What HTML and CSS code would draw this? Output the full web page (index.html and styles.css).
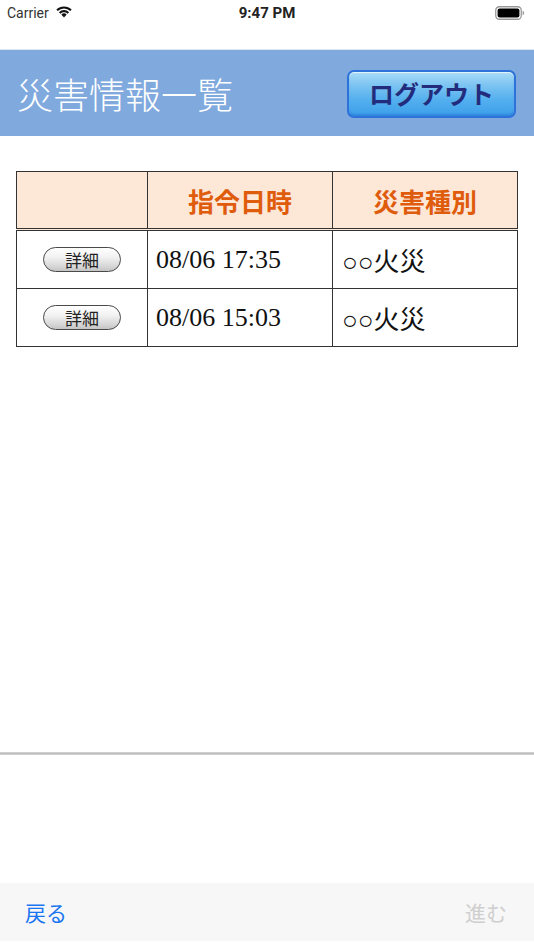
FILE: index.html
```html
<!DOCTYPE html>
<html lang="ja">
<head>
<meta charset="utf-8">
<title>災害情報一覧</title>
<link rel="stylesheet" href="styles.css">
</head>
<body>
<div class="screen">
  <div class="statusbar">
    <div class="sb-left">
      <span class="carrier">Carrier</span>
      <svg class="wifi" width="18" height="13" viewBox="0 0 18 13">
        <path d="M9 12.5 L6.3 9.6 A3.9 3.9 0 0 1 11.7 9.6 Z" fill="#111"/>
        <path d="M3.9 7.2 A7.3 7.3 0 0 1 14.1 7.2 L12.6 8.7 A5.2 5.2 0 0 0 5.4 8.7 Z" fill="#111"/>
        <path d="M1.3 4.6 A11 11 0 0 1 16.7 4.6 L15.2 6.1 A8.9 8.9 0 0 0 2.8 6.1 Z" fill="#111"/>
      </svg>
    </div>
    <div class="sb-time">9:47 PM</div>
    <div class="sb-right">
      <svg class="battery" width="30" height="14" viewBox="0 0 30 14">
        <rect x="0.75" y="0.75" width="25.5" height="12.5" rx="3.5" fill="none" stroke="#999" stroke-width="1.3"/>
        <rect x="2.6" y="2.6" width="21.8" height="8.8" rx="2" fill="#000"/>
        <path d="M27.6 4.8 Q29.2 5.2 29.2 7 Q29.2 8.8 27.6 9.2 Z" fill="#999"/>
      </svg>
    </div>
  </div>
  <div class="topgap"></div>
  <header class="header">
    <h1 class="title">災害情報一覧</h1>
    <button class="logout">ログアウト</button>
  </header>
  <main class="main">
    <table class="list">
      <colgroup>
        <col class="c1"><col class="c2"><col class="c3">
      </colgroup>
      <thead>
        <tr>
          <th></th>
          <th>指令日時</th>
          <th>災害種別</th>
        </tr>
      </thead>
      <tbody>
        <tr>
          <td class="btncell"><button class="detail">詳細</button></td>
          <td class="date">08/06 17:35</td>
          <td class="kind">○○火災</td>
        </tr>
        <tr>
          <td class="btncell"><button class="detail">詳細</button></td>
          <td class="date">08/06 15:03</td>
          <td class="kind">○○火災</td>
        </tr>
      </tbody>
    </table>
  </main>
  <div class="separator"></div>
  <div class="blank"></div>
  <nav class="toolbar">
    <span class="back">戻る</span>
    <span class="forward">進む</span>
  </nav>
  <div class="bottom"></div>
</div>
</body>
</html>
```

FILE: styles.css
```css
html, body {
  margin: 0;
  padding: 0;
  background: #ffffff;
}

.screen {
  width: 534px;
  height: 950px;
  display: flex;
  flex-direction: column;
  font-family: "Noto Sans CJK JP", "Noto Sans", sans-serif;
  overflow: hidden;
}

.statusbar {
  height: 25px;
  display: flex;
  align-items: center;
  justify-content: space-between;
  padding: 0 8px 0 7px;
  font-family: "Roboto", "Liberation Sans", sans-serif;
  color: #222;
  position: relative;
}

.sb-left {
  display: flex;
  align-items: center;
  gap: 6px;
}

.carrier {
  font-size: 14px;
  color: #333;
}

.wifi {
  margin-top: -2px;
}

.sb-time {
  font-size: 15px;
  font-weight: 700;
  color: #222;
  position: absolute;
  left: 0;
  right: 0;
  text-align: center;
  pointer-events: none;
}

.sb-right {
  display: flex;
  align-items: center;
}

.battery {
  margin-right: 1px;
}

.topgap {
  height: 25px;
  border-bottom: 1px solid #dde6f2;
  box-sizing: border-box;
}

.header {
  height: 86px;
  background: #80a9de;
  display: flex;
  align-items: center;
  justify-content: space-between;
  padding: 0 18px 0 17px;
  box-sizing: border-box;
}

.title {
  margin: 0;
  color: #ffffff;
  font-size: 36px;
  font-weight: 300;
  line-height: 1;
}

.logout {
  width: 169px;
  height: 48px;
  margin-top: 1px;
  border: 2px solid #2d72d9;
  border-radius: 7px;
  background: linear-gradient(to bottom, #a9dcf8 0%, #7cc4f2 30%, #52aeee 65%, #3d9fea 100%);
  box-shadow: inset 0 1px 1px rgba(255,255,255,0.7), inset 0 -2px 2px rgba(20,90,200,0.35);
  color: #232c7c;
  font-family: "Noto Sans CJK JP", sans-serif;
  font-weight: 700;
  font-size: 25px;
  padding: 0;
  line-height: 1;
}

.main {
  flex: 1;
  padding: 35px 17px 0 16px;
}

.list {
  width: 501px;
  border-collapse: collapse;
  table-layout: fixed;
  border: 1px solid #333;
}

.c1 { width: 131px; }
.c2 { width: 185px; }
.c3 { width: 185px; }

.list th {
  height: 56px;
  background: #fde8d8;
  color: #e05c0d;
  font-size: 26px;
  font-weight: 700;
  border: 1px solid #333;
  border-bottom: 3px double #333;
  padding: 0;
  text-align: center;
}

.list td {
  height: 57px;
  border: 1px solid #333;
  padding: 0;
}

.btncell {
  text-align: center;
}

.detail {
  width: 78px;
  height: 25px;
  border: 1.5px solid #4a4a4a;
  border-radius: 13px;
  background: linear-gradient(to bottom, #ffffff 0%, #f2f2f2 40%, #d6d6d6 80%, #c4c4c4 100%);
  font-family: "Noto Sans CJK JP", sans-serif;
  font-size: 17px;
  color: #222;
  padding: 0;
  line-height: 1;
}

.date {
  font-family: "Liberation Serif", serif;
  font-size: 26px;
  color: #111;
  padding-left: 8px !important;
}

.kind {
  font-family: "Liberation Serif", "Noto Sans CJK JP", serif;
  font-size: 26px;
  color: #111;
  padding-left: 9px !important;
}

.separator {
  height: 3px;
  background: linear-gradient(to bottom, #d8d8d8, #bdbdbd, #d8d8d8);
}

.blank {
  height: 128px;
}

.toolbar {
  height: 58px;
  background: #f7f7f7;
  display: flex;
  align-items: center;
  justify-content: space-between;
  padding: 0 27px 0 25px;
  font-size: 21px;
}

.back {
  color: #1a75f2;
}

.forward {
  color: #cfcfcf;
}

.bottom {
  height: 9px;
  background: #ffffff;
}
```
